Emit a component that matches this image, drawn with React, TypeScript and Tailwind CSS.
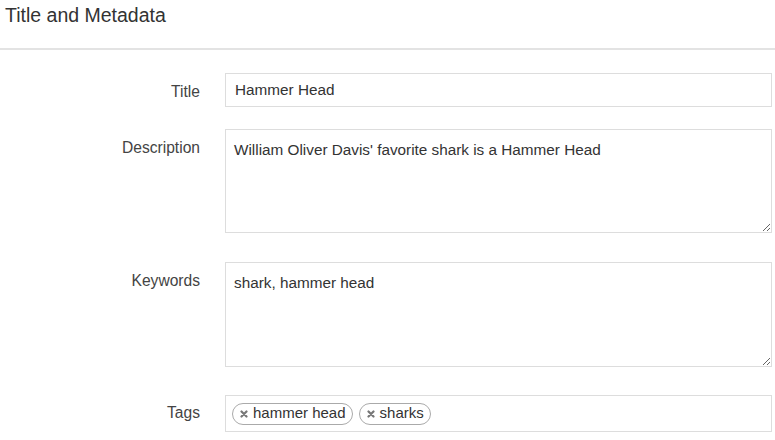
const rows = 'grid grid-cols-[200px_547px] gap-x-[25px]';

function Label({ children, pt }: { children: string; pt: string }) {
  return <div className={`text-right text-[15.6px] text-[#444] ${pt}`}>{children}</div>;
}

function Tag({ label }: { label: string }) {
  return (
    <span className="flex items-center h-[22px] rounded-full border border-[#aaa] pl-[7px] pr-[6px] gap-[5px] text-[15px] text-[#333] bg-white">
      <svg width="8" height="8" viewBox="0 0 8 8" className="mt-[1px]">
        <path d="M1.5 1.5L6.5 6.5M6.5 1.5L1.5 6.5" stroke="#777" strokeWidth="2.2" strokeLinecap="round" />
      </svg>
      {label}
    </span>
  );
}

export default function App() {
  return (
    <div className="w-[775px] h-[440px] bg-white overflow-hidden font-['Liberation_Sans',Arial,sans-serif] text-[#333]">
      <div className="h-[50px] border-b-2 border-[#e3e3e3] px-[5px] pt-[3px]">
        <h2 className="text-[19.5px] leading-[24px] text-[#333]">Title and Metadata</h2>
      </div>

      <div className="pt-[23px] flex flex-col">
        <div className={rows}>
          <Label pt="pt-[7px]">Title</Label>
          <input
            readOnly
            defaultValue="Hammer Head"
            className="h-[34px] w-full border border-[#ddd] px-[9px] text-[15.3px] text-[#333] outline-none"
          />
        </div>

        <div className={`${rows} mt-[22px]`}>
          <Label pt="pt-[7px]">Description</Label>
          <textarea
            readOnly
            defaultValue="William Oliver Davis' favorite shark is a Hammer Head"
            className="h-[104px] w-full border border-[#ddd] px-[8px] py-[10px] text-[15.3px] leading-[20px] text-[#333] outline-none resize-y"
          />
        </div>

        <div className={`${rows} mt-[29px]`}>
          <Label pt="pt-[7px]">Keywords</Label>
          <textarea
            readOnly
            defaultValue="shark, hammer head"
            className="h-[105px] w-full border border-[#ddd] px-[8px] py-[10px] text-[15.3px] leading-[20px] text-[#333] outline-none resize-y"
          />
        </div>

        <div className={`${rows} mt-[28px]`}>
          <Label pt="pt-[6px]">Tags</Label>
          <div className="h-[37px] w-full border border-[#ddd] flex items-center gap-[6px] px-[6px]">
            <Tag label="hammer head" />
            <Tag label="sharks" />
          </div>
        </div>
      </div>
    </div>
  );
}
